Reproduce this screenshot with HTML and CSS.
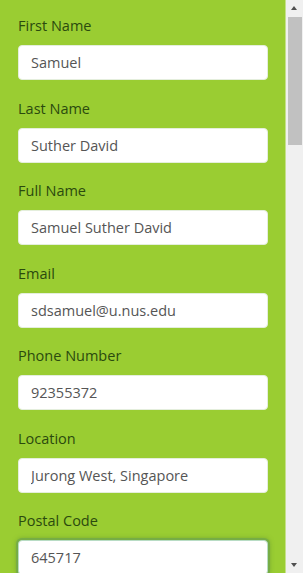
FILE: index.html
```html
<!DOCTYPE html>
<html lang="en">
<head>
    <meta charset="UTF-8">
    <meta name="viewport" content="width=device-width, initial-scale=1.0">
    <title>Profile</title>
    <link rel="stylesheet" href="styles.css">
</head>
<body>
    <div class="page">
        <form class="profile-form">
            <div class="field">
                <label for="firstName">First Name</label>
                <input id="firstName" type="text" value="Samuel">
            </div>
            <div class="field">
                <label for="lastName">Last Name</label>
                <input id="lastName" type="text" value="Suther David">
            </div>
            <div class="field">
                <label for="fullName">Full Name</label>
                <input id="fullName" type="text" value="Samuel Suther David">
            </div>
            <div class="field">
                <label for="email">Email</label>
                <input id="email" type="text" value="sdsamuel@u.nus.edu">
            </div>
            <div class="field">
                <label for="phone">Phone Number</label>
                <input id="phone" type="text" value="92355372">
            </div>
            <div class="field">
                <label for="location">Location</label>
                <input id="location" type="text" value="Jurong West, Singapore">
            </div>
            <div class="field">
                <label for="postal">Postal Code</label>
                <input id="postal" class="focused" type="text" value="645717">
            </div>
        </form>
        <div class="scrollbar">
            <div class="scroll-btn up"></div>
            <div class="scroll-track">
                <div class="scroll-thumb"></div>
            </div>
            <div class="scroll-btn down"></div>
        </div>
    </div>
</body>
</html>
```

FILE: styles.css
```css
html, body { margin: 0; padding: 0; height: 100%; overflow: hidden; }
body { font-family: "Open Sans", "Noto Sans", sans-serif; font-size: 14.5px; }
.page { display: flex; height: 573px; }

.profile-form { flex: 1; background: #9acd32; padding: 16px 18px 0 18px; border-right: 1px solid #c6e08a; overflow: hidden; }
.field { margin-bottom: 18.5px; }
.field label { display: block; color: #2b4a0e; font-size: 14.5px; line-height: 20px; margin-bottom: 9px; }
.field input { display: block; box-sizing: border-box; width: 250px; height: 35px; padding: 0 12px; border: 1px solid #e4eedc; border-radius: 4px; background: #fff; color: #555; font-family: inherit; font-size: 14.5px; outline: none; }
.field input.focused { border: 1px solid #b8dcc4; box-shadow: 0 0 0 2px #76ad45, 0 0 4px 2px rgba(90, 140, 50, 0.5); }

.scrollbar { width: 17px; display: flex; flex-direction: column; background: #f0f0f0; }
.scroll-btn { height: 17px; position: relative; }
.scroll-btn::after { content: ""; position: absolute; left: 5px; border-left: 3.5px solid transparent; border-right: 3.5px solid transparent; }
.scroll-btn.up::after { top: 6px; border-bottom: 4px solid #505050; }
.scroll-btn.down::after { top: 7px; border-top: 4px solid #505050; }
.scroll-track { flex: 1; padding: 0 1px 0 2px; }
.scroll-thumb { height: 128px; background: #c1c1c1; }
```
